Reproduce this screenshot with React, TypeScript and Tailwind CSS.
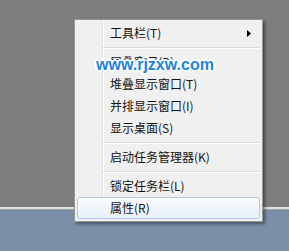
import React from "react";

function Item({ label, arrow, active }: { label: string; arrow?: boolean; active?: boolean }) {
  return (
    <div
      className={
        active
          ? "h-[22px] flex items-center justify-between pl-[32px] pr-[8px] border border-[#b0c9e8] rounded-[3px] bg-[linear-gradient(to_bottom,#fafcfe,#e7eff9)]"
          : "h-[22px] flex items-center justify-between pl-[32px] pr-[8px] border border-transparent"
      }
    >
      <span className="text-[12px] leading-[14px] text-[#141414]">{label}</span>
      {arrow ? (
        <svg width="4" height="7" viewBox="0 0 4 7" className="block">
          <polygon points="0,0 4,3.5 0,7" fill="#000" />
        </svg>
      ) : null}
    </div>
  );
}

function Sep() {
  return (
    <div className="h-[7px] flex items-center pl-[26px]">
      <div className="h-[2px] flex-1 border-t border-[#dcdcdc] border-b border-b-white" />
    </div>
  );
}

export default function App() {
  return (
    <div className="relative w-[289px] h-[251px] overflow-hidden font-['Noto_Sans_CJK_SC','Noto_Sans',sans-serif]">
      <div className="flex flex-col h-full">
        <div className="h-[207px] bg-[#7e7e7e]" />
        <div className="h-[2px] bg-[#dde0e4]" />
        <div className="h-[1px] bg-[#9a9ea4]" />
        <div className="flex-1 bg-[#7c8fa8]" />
      </div>

      <div className="absolute left-[74px] top-[19px] w-[189px] border border-[#979797] bg-[#f0f0f0] bg-[linear-gradient(to_right,transparent_27px,#e2e3e3_27px,#e2e3e3_28px,#ffffff_28px,#ffffff_29px,transparent_29px)] p-[2px] shadow-[2px_2px_3px_rgba(0,0,0,0.45)]">
        <Item label="工具栏(T)" arrow />
        <Sep />
        <Item label="层叠窗口(D)" />
        <Item label="堆叠显示窗口(T)" />
        <Item label="并排显示窗口(I)" />
        <Item label="显示桌面(S)" />
        <Sep />
        <Item label="启动任务管理器(K)" />
        <Sep />
        <Item label="锁定任务栏(L)" />
        <Item label="属性(R)" active />
      </div>

      <div className="absolute left-[96px] top-[57px] text-[16px] leading-[16px] font-bold text-[#2684d8] font-['Liberation_Sans',sans-serif] [text-shadow:2px_0_0_#fff,-2px_0_0_#fff,0_2px_0_#fff,0_-2px_0_#fff,1px_1px_0_#fff,-1px_-1px_0_#fff,1px_-1px_0_#fff,-1px_1px_0_#fff,2px_1px_0_#fff,-2px_1px_0_#fff,2px_-1px_0_#fff,-2px_-1px_0_#fff]">
        www.rjzxw.com
      </div>
    </div>
  );
}
